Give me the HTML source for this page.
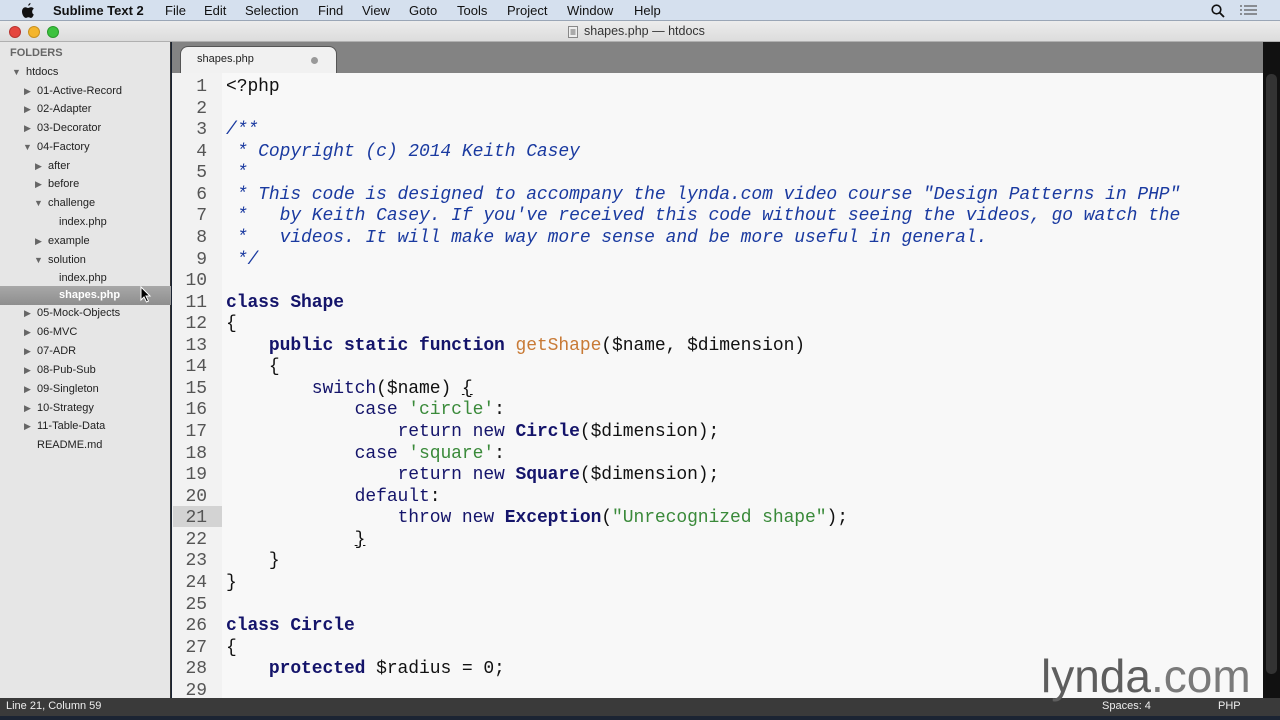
<!DOCTYPE html>
<html><head><meta charset="utf-8">
<style>
*{margin:0;padding:0;box-sizing:border-box}
html,body{width:1280px;height:720px;overflow:hidden;background:#1b2433;font-family:"Liberation Sans",sans-serif}
#menu{position:absolute;left:0;top:0;width:1280px;height:21px;background:#d5e0ee;border-bottom:1px solid #9aa6b6;font-size:13px;color:#111}
#menu span{position:absolute;top:3px}
#title{position:absolute;left:0;top:21px;width:1280px;height:21px;background:linear-gradient(#ececec,#dcdcdc);border-bottom:1px solid #b0b0b0}
#title .t{position:absolute;left:584px;top:3px;font-size:12.5px;color:#333}
.dot{position:absolute;top:26px;width:12px;height:12px;border-radius:50%}
#side{position:absolute;left:0;top:42px;width:171px;height:656px;background:#e6e6e6;border-right:1px solid #333}
#side div{position:absolute;font-size:11px;color:#222;white-space:nowrap}
#side div,#side .ar{margin-top:2px}
#side div.sel{margin-top:0}
.ar{font-size:9px;color:#666;position:absolute}
#tabs{position:absolute;left:172px;top:42px;width:1091px;height:31px;background:#838383}
#tab{position:absolute;left:8px;top:4px;width:157px;height:27px;background:#f1f1f1;border-radius:8px 8px 0 0;border:1px solid #555;border-bottom:none}
#ed{position:absolute;left:172px;top:73px;width:1091px;height:625px;background:#f8f8f8;overflow:hidden}
#gut{position:absolute;left:0;top:0;width:50px;height:625px;background:#f2f2f2}
.ln{position:absolute;left:0;width:35px;text-align:right;font:18px/21.56px "Liberation Mono",monospace;color:#555;letter-spacing:-0.08px}
.cl{position:absolute;left:54px;white-space:pre;font:18px/21.56px "Liberation Mono",monospace;color:#111;letter-spacing:-0.08px}
.c{color:#1a3aa0;font-style:italic}
.k{color:#14146a;font-weight:bold}
.n{color:#14146a}
.s{color:#3a8a3a}
.f{color:#c87a36}
#sb{position:absolute;left:1263px;top:42px;width:17px;height:656px;background:#111}
#status{position:absolute;left:0;top:698px;width:1280px;height:18px;background:#3a3a3a;color:#eee;font-size:11px}
#logo{position:absolute;left:1041px;top:650px;font:46px/52px "Liberation Sans",sans-serif;z-index:5}
</style></head><body>
<div id="menu">
<svg style="position:absolute;left:21px;top:3px" width="14" height="16" viewBox="0 0 14 16"><path d="M9.5 0c.1 1.2-.8 2.6-2.2 2.7C7.1 1.5 8.2.2 9.5 0zM12.8 11.5c-.5 1.2-1.4 3.4-2.7 3.4-1.1 0-1.4-.7-2.7-.7s-1.7.7-2.7.7C3.4 14.9 1 12 1 8.6 1 5.900 2.8 4.3 4.4 4.3c1.1 0 1.9.7 2.7.7.8 0 1.7-.8 3-.7.5 0 1.9.2 2.7 1.4-2.4 1.4-1.9 4.9 0 5.8z" fill="#111"/></svg>
<span style="left:53px;font-weight:bold">Sublime Text 2</span>
<span style="left:165px">File</span><span style="left:204px">Edit</span><span style="left:245px">Selection</span><span style="left:318px">Find</span><span style="left:362px">View</span><span style="left:409px">Goto</span><span style="left:457px">Tools</span><span style="left:507px">Project</span><span style="left:567px">Window</span><span style="left:634px">Help</span>
<svg style="position:absolute;left:1211px;top:4px" width="14" height="14"><circle cx="5.5" cy="5.5" r="4.3" stroke="#111" stroke-width="1.6" fill="none"/><line x1="8.6" y1="8.6" x2="13" y2="13" stroke="#111" stroke-width="1.8"/></svg>
<svg style="position:absolute;left:1240px;top:4px" width="17" height="13"><g stroke="#555" stroke-width="1.2"><line x1="0" y1="2" x2="2" y2="2"/><line x1="4" y1="2" x2="17" y2="2"/><line x1="0" y1="6" x2="2" y2="6"/><line x1="4" y1="6" x2="17" y2="6"/><line x1="0" y1="10" x2="2" y2="10"/><line x1="4" y1="10" x2="17" y2="10"/></g></svg>
</div>
<div id="title"><svg style="position:absolute;left:568px;top:5px" width="10" height="12"><rect x="0.5" y="0.5" width="9" height="11" fill="#eee" stroke="#888"/><rect x="2.5" y="3" width="5" height="6" fill="#aaa"/></svg><span class="t">shapes.php — htdocs</span></div>
<div class="dot" style="left:9px;background:#e5463f;border:1px solid #b83530"></div>
<div class="dot" style="left:28px;background:#f4b52c;border:1px solid #c89020"></div>
<div class="dot" style="left:47px;background:#3cc23e;border:1px solid #2a9a2c"></div>
<div id="side">
<div style="left:10px;top:3px;font-weight:bold;color:#666">FOLDERS</div>
<span class="ar" style="left:12px;top:23px">▼</span><div style="left:26px;top:22px">htdocs</div>
<span class="ar" style="left:24px;top:42px">▶</span><div style="left:37px;top:41px">01-Active-Record</div>
<span class="ar" style="left:24px;top:60px">▶</span><div style="left:37px;top:59px">02-Adapter</div>
<span class="ar" style="left:24px;top:79px">▶</span><div style="left:37px;top:78px">03-Decorator</div>
<span class="ar" style="left:23px;top:98px">▼</span><div style="left:37px;top:97px">04-Factory</div>
<span class="ar" style="left:35px;top:117px">▶</span><div style="left:48px;top:116px">after</div>
<span class="ar" style="left:35px;top:135px">▶</span><div style="left:48px;top:134px">before</div>
<span class="ar" style="left:34px;top:154px">▼</span><div style="left:48px;top:153px">challenge</div>
<div style="left:59px;top:172px">index.php</div>
<span class="ar" style="left:35px;top:192px">▶</span><div style="left:48px;top:191px">example</div>
<span class="ar" style="left:34px;top:211px">▼</span><div style="left:48px;top:210px">solution</div>
<div style="left:59px;top:228px">index.php</div>
<div class="sel" style="left:0;top:244px;width:171px;height:19px;background:linear-gradient(#a8a8a8,#8e8e8e)"></div>
<div style="left:59px;top:245px;color:#fff;font-weight:bold">shapes.php</div>
<svg style="position:absolute;left:140px;top:244px" width="12" height="18"><path d="M1 1 L1 14 L4 11 L6.5 16 L8.5 15 L6 10 L10 10 Z" fill="#000" stroke="#fff" stroke-width="1"/></svg>
<span class="ar" style="left:24px;top:264px">▶</span><div style="left:37px;top:263px">05-Mock-Objects</div>
<span class="ar" style="left:24px;top:283px">▶</span><div style="left:37px;top:282px">06-MVC</div>
<span class="ar" style="left:24px;top:302px">▶</span><div style="left:37px;top:301px">07-ADR</div>
<span class="ar" style="left:24px;top:321px">▶</span><div style="left:37px;top:320px">08-Pub-Sub</div>
<span class="ar" style="left:24px;top:340px">▶</span><div style="left:37px;top:339px">09-Singleton</div>
<span class="ar" style="left:24px;top:359px">▶</span><div style="left:37px;top:358px">10-Strategy</div>
<span class="ar" style="left:24px;top:377px">▶</span><div style="left:37px;top:376px">11-Table-Data</div>
<div style="left:37px;top:395px">README.md</div>
</div>
<div id="tabs"><div id="tab"></div>
<span style="position:absolute;left:25px;top:11px;font-size:11px;color:#222">shapes.php</span>
<span style="position:absolute;left:139px;top:15px;width:7px;height:7px;border-radius:50%;background:#999"></span></div>
<div id="ed">
<div id="gut"></div>
<div style="position:absolute;left:1px;top:433px;width:49px;height:21px;background:#d3d3d3"></div>
<div style="position:absolute;left:0;top:0">
<div class="ln" style="top:4px">1<br>2<br>3<br>4<br>5<br>6<br>7<br>8<br>9<br>10<br>11<br>12<br>13<br>14<br>15<br>16<br>17<br>18<br>19<br>20<br>21<br>22<br>23<br>24<br>25<br>26<br>27<br>28<br>29</div>
<div class="cl" style="top:4px">&lt;?php

<span class="c">/**
 * Copyright (c) 2014 Keith Casey
 *
 * This code is designed to accompany the lynda.com video course "Design Patterns in PHP"
 *   by Keith Casey. If you've received this code without seeing the videos, go watch the
 *   videos. It will make way more sense and be more useful in general.
 */</span>

<span class="k">class Shape</span>
{
    <span class="k">public static function</span> <span class="f">getShape</span>($name, $dimension)
    {
        <span class="n">switch</span>($name) <u>{</u>
            <span class="n">case</span> <span class="s">'circle'</span>:
                <span class="n">return new</span> <span class="k">Circle</span>($dimension);
            <span class="n">case</span> <span class="s">'square'</span>:
                <span class="n">return new</span> <span class="k">Square</span>($dimension);
            <span class="n">default</span>:
                <span class="n">throw new</span> <span class="k">Exception</span>(<span class="s">"Unrecognized shape"</span>);
            <u>}</u>
    }
}

<span class="k">class Circle</span>
{
    <span class="k">protected</span> $radius = 0;
</div></div>
</div>
<div id="sb"><div style="position:absolute;left:3px;top:32px;width:11px;height:600px;background:#333;border-radius:5px"></div></div>
<div id="status"><span style="position:absolute;left:6px;top:2px">Line 21, Column 59</span><span style="position:absolute;left:1102px;top:2px">Spaces: 4</span><span style="position:absolute;left:1218px;top:2px">PHP</span></div>
<div id="logo"><span style="color:#5e5e5e">lynda</span><span style="color:#7a7a7a">.com</span></div>
</body></html>
